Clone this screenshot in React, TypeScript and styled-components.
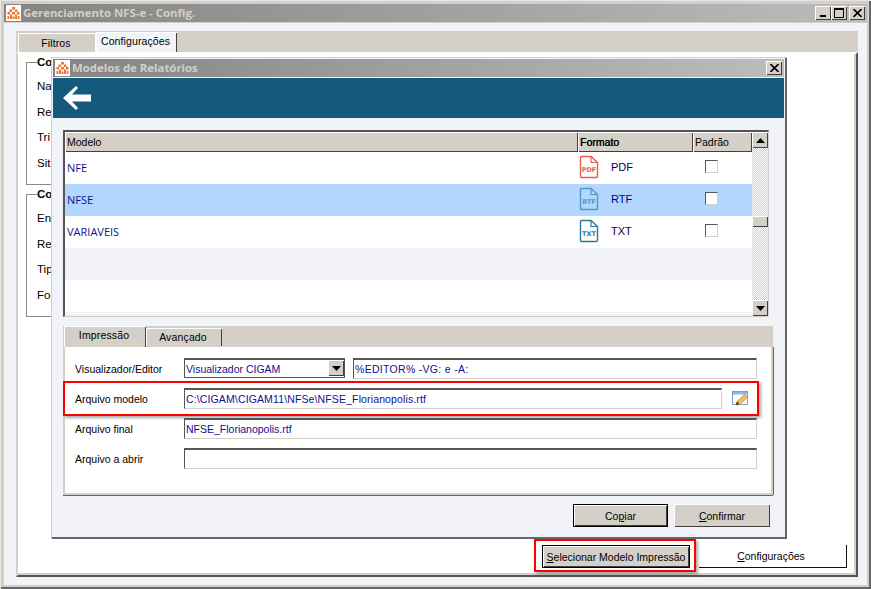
import React from "react";
import styled, { createGlobalStyle } from "styled-components";

const Global = createGlobalStyle`
  html, body { margin: 0; padding: 0; background: #fff; }
  body { font-family: "Liberation Sans", Arial, sans-serif; font-size: 10.5px; color: #000; }
  * { box-sizing: border-box; }
`;

const Win = styled.div`
  position: relative; width: 871px; height: 589px; padding: 4px;
  background: #d4d0c8; display: flex; flex-direction: column; overflow: hidden;
  box-shadow: inset 1px 1px 0 #e8e6e0, inset -2px -2px 0 #666;
`;
const TitleBar = styled.div`
  height: 18px; flex: none; display: flex; align-items: center; padding: 0 2px;
  background: linear-gradient(90deg, #848484, #bcbcbc);
`;
const TitleText = styled.span`
  margin-left: 2px; padding-bottom: 1px; font-family: "Open Sans", sans-serif; font-weight: 700; font-size: 11.4px;
  color: #d4d0c8; flex: 1; white-space: nowrap;
`;
const WinBtn = styled.button`
  width: 16px; height: 14px; padding: 0; background: #d4d0c8; border: 0;
  box-shadow: inset 1px 1px 0 #fff, inset -1px -1px 0 #404040;
  display: flex; align-items: center; justify-content: center;
`;
const CloseBtn = styled(WinBtn)`
  margin-left: 2px;
`;
const Body = styled.div`
  flex: 1; background: #f1f3f9; margin-top: 1px; padding: 8px 9px 8px 12px;
  display: flex; flex-direction: column; min-height: 0;
`;
const TabStrip = styled.div`
  height: 21px; flex: none; background: #d4d0c8; display: flex; align-items: flex-end; padding-left: 2px;
`;
const OuterTab = styled.div<{ $on?: boolean }>`
  width: ${p => p.$on ? 81 : 78}px; height: ${p => p.$on ? 21 : 19}px;
  margin-bottom: ${p => p.$on ? -1 : 0}px;
  background: ${p => p.$on ? "#f1f3f9" : "#d4d0c8"};
  box-shadow: inset 1px 1px 0 #fff, ${p => p.$on ? "inset -1px 0 0 #404040" : "inset -1px 0 0 #fff"};
  display: flex; align-items: center; justify-content: center;
  padding: 0 2px ${p => p.$on ? 3 : 0}px 0; position: relative; letter-spacing: .1px;
`;
const Page = styled.div`
  position: relative; flex: 1; background: #fff; padding: 1px 9px 7px 8px; display: flex; flex-direction: column;
  border-style: solid; border-width: 2px; border-color: #fff #555 #555 #d4d0c8;
  box-shadow: inset -2px -2px 0 #d4d0c8;
`;
const Group = styled.fieldset`
  margin: 0 0 2px; padding: 0 0 0 10px; width: 750px; border: 1px solid #8a8a8a; height: 130px; min-width: 0;
  display: flex; flex-direction: column;
  & > legend { font-weight: 700; padding: 0; margin-left: 0; font-size: 11.5px; line-height: 14px; }
`;
const GroupLabel = styled.div`
  height: 25.7px; line-height: 25.7px; font-size: 11.5px; position: relative; top: 5px;
`;
const PageFoot = styled.div`
  margin-top: auto; display: flex; justify-content: flex-end; gap: 9px; height: 23px;
`;
const Btn = styled.button<{ $def?: boolean; $w: number }>`
  position: relative; width: ${p => p.$w}px; height: 23px; padding: 0;
  font: inherit; color: #000; background: #d4d0c8; white-space: nowrap;
  border: ${p => p.$def ? "1px solid #000" : "0"};
  box-shadow: inset 1px 1px 0 #fff, inset -1px -1px 0 #404040;
`;
const FlatBtn = styled.button`
  width: 148px; height: 23px; padding: 0 3px 0 0; font: inherit; color: #000; background: #fff;
  border: 0; border-right: 1px solid #111; border-bottom: 1px solid #111;
`;
const Acc = styled.span` text-decoration: underline; `;
const Highlight = styled.div`
  position: absolute; border: 2px solid #f00; pointer-events: none;
  box-shadow: 2px 2px 3px rgba(0,0,0,.35);
`;
const Modal = styled.div`
  position: absolute; left: 51px; top: 57px; width: 736px; height: 482px; z-index: 2;
  background: #f1f3f9; padding: 2px; display: flex; flex-direction: column;
  box-shadow: inset 1px 1px 0 #d4d0c8, inset -2px -2px 0 #666;
`;
const ModalWrap = styled.div`
  flex: 1; display: flex; flex-direction: column; min-height: 0; margin-right: 1px;
`;
const Band = styled.div`
  margin-top: 1px; height: 40px; flex: none; background: #135a7c; display: flex; align-items: center; padding-left: 10px;
`;
const ModalBody = styled.div`
  flex: 1; padding: 12px 13px 0 10px; display: flex; flex-direction: column;
`;
const Grid = styled.div`
  height: 187px; width: 706px; flex: none; display: flex; background: #f1f3f9;
  border-top: 2px solid #555; border-left: 2px solid #555; border-right: 1px solid #d4d0c8; border-bottom: 1px solid #d4d0c8;
`;
const GridMain = styled.div` width: 687px; display: flex; flex-direction: column; `;
const HeadRow = styled.div`
  display: grid; grid-template-columns: 513px 115px 59px; height: 20px; flex: none;
`;
const HeadCell = styled.div<{ $strong?: boolean }>`
  background: #d4d0c8; padding-left: 2px; line-height: 20px;
  box-shadow: inset 1px 1px 0 #fff, inset -1px -1px 0 #404040;
  ${p => p.$strong ? "text-shadow: 0.3px 0 0 #000;" : ""}
`;
const Row = styled.div<{ $bg: string }>`
  display: grid; grid-template-columns: 513px 115px 59px; height: 32px; flex: none; background: ${p => p.$bg};
`;
const CellName = styled.div`
  color: #101090; padding: 0 0 2px 2px; display: flex; align-items: center; font-family: "Open Sans", sans-serif; font-size: 11px;
`;
const CellFmt = styled.div<{ $c: string }>`
  display: flex; align-items: center; padding-left: 1px; padding-bottom: 3px; gap: 12px; color: ${p => p.$c}; font-size: 11px;
`;
const CellChk = styled.div` display: flex; padding: 8px 0 0 12px; `;
const Check = styled.span`
  width: 13px; height: 13px; display: block; background: #fff;
  border: 1px solid #d4d0c8; border-top-color: #555; border-left-color: #555;
`;
const Scroll = styled.div`
  width: 16px; flex: none; display: flex; flex-direction: column; justify-content: space-between; position: relative;
  background: repeating-conic-gradient(#d4d0c8 0 25%, #fff 0 50%) 0 0 / 2px 2px;
`;
const ScrollBtn = styled.div`
  width: 16px; height: 16px; background: #d4d0c8; display: flex; align-items: center; justify-content: center;
  box-shadow: inset 1px 1px 0 #fff, inset -1px -1px 0 #404040;
`;
const Thumb = styled(ScrollBtn)`
  position: absolute; left: 0; top: 84px; height: 11px;
`;
const SubStrip = styled.div`
  margin-top: 9px; height: 21px; width: 710px; flex: none; background: #d4d0c8; display: flex; align-items: flex-end; padding-left: 1px;
`;
const SubTab = styled.div<{ $on?: boolean }>`
  width: ${p => p.$on ? 82 : 76}px; height: ${p => p.$on ? 21 : 18}px; background: #d4d0c8;
  margin-bottom: ${p => p.$on ? 0 : 1}px; letter-spacing: .15px;
  box-shadow: inset 1px 1px 0 #fff, inset -1px 0 0 #404040;
  display: flex; align-items: center; justify-content: center; padding: 0 2px ${p => p.$on ? 3 : 0}px 0;
`;
const SubPanel = styled.div`
  width: 710px; height: 148px; flex: none; background: #fff; padding: 11px 0 0 10px; display: flex; flex-direction: column; gap: 9px;
  border: 2px solid #d4d0c8; border-top: 0;
  box-shadow: 0 1px 0 #666, 1px 0 0 #666;
`;
const FormRow = styled.div` position: relative; display: flex; height: 21px; align-items: center; `;
const FormLabel = styled.label` width: 109px; flex: none; `;
const Field = styled.div<{ $w: number; $ml?: number; $ls?: number }>`
  width: ${p => p.$w}px; margin-left: ${p => p.$ml || 0}px; height: 21px; flex: none; background: #fff;
  border: 1px solid #d4d0c8; border-top: 2px solid #555; border-left: 1px solid #555;
  color: #101090; line-height: 19px; padding-left: 1px; white-space: nowrap; overflow: hidden;
  letter-spacing: ${p => p.$ls || 0}px;
`;
const Select = styled(Field)`
  position: relative; padding-left: 1px; border-right-color: #555; border-bottom-color: #555; height: 20px; align-self: flex-start;
  line-height: 18px;
`;
const SelectBtn = styled(ScrollBtn)`
  position: absolute; right: 0; top: 0; height: 16px;
`;
const ModalFoot = styled.div`
  margin-top: 9px; display: flex; justify-content: flex-end; gap: 6px; width: 707px;
`;

const Logo = () => (
  <svg width="15" height="16" viewBox="0 0 15 16" style={{ flex: "none" }}>
    <rect width="15" height="16" fill="#fff" />
    <g fill="#f4742b">
      <rect x="6" y="2" width="3" height="2.500" />
      <rect x="3.500" y="4.500" width="2.500" height="2.500" /><rect x="9" y="4.500" width="2.500" height="2.500" />
      <rect x="1.500" y="7" width="2.500" height="2.500" /><rect x="6" y="7" width="3" height="2.500" /><rect x="11" y="7" width="2.500" height="2.500" />
      <rect x="4" y="9.500" width="2" height="4.500" /><rect x="9" y="9.500" width="2" height="4.500" />
      <rect x="1.500" y="11" width="1.800" height="3" /><rect x="11.700" y="11" width="1.800" height="3" /><rect x="6.500" y="11.500" width="2" height="2.500" />
    </g>
  </svg>
);
const CloseGlyph = () => (
  <svg width="9" height="8" viewBox="0 0 9 8"><path d="M0.500 0L8.500 8M8.500 0L0.500 8" stroke="#000" strokeWidth="1.600" /></svg>
);
const FileIcon = ({ color, label }: { color: string; label: string }) => (
  <svg width="20" height="24" viewBox="0 0 20 24" style={{ flex: "none" }}>
    <path d="M1.500 2.500a1 1 0 0 1 1-1H12l6.500 6V21.500a1 1 0 0 1-1 1h-15a1 1 0 0 1-1-1z" fill="none" stroke={color} strokeWidth="1.400" />
    <path d="M12 1.500V7.500H18.500" fill="none" stroke={color} strokeWidth="1.200" />
    <text x="10" y="16.500" textAnchor="middle" fontSize="6.500" fontWeight="700" fontFamily="DejaVu Sans, sans-serif" fill={color}>{label}</text>
  </svg>
);
const Tri = ({ up }: { up?: boolean }) => (
  <svg width="9" height="5" viewBox="0 0 9 5"><path d={up ? "M4.500 0L9 5H0z" : "M0 0H9L4.500 5z"} fill="#000" /></svg>
);

const rows = [
  { n: "NFE", f: "PDF", c: "#ee5a4e", tc: "#000060", bg: "#ffffff" },
  { n: "NFSE", f: "RTF", c: "#4a9cc8", tc: "#000090", bg: "#b2d6fd" },
  { n: "VARIAVEIS", f: "TXT", c: "#2f7a9c", tc: "#200040", bg: "#ffffff" },
];

export default function App() {
  return (
    <Win>
      <Global />
      <TitleBar>
        <Logo />
        <TitleText>Gerenciamento NFS-e - Config.</TitleText>
        <WinBtn aria-label="min"><svg width="8" height="8" viewBox="0 0 8 8"><rect x="1" y="6" width="6" height="2" /></svg></WinBtn>
        <WinBtn aria-label="max"><svg width="10" height="10" viewBox="0 0 10 10"><path d="M.5 1.500H9.500V9.500H.5z" fill="none" stroke="#000" /><rect width="10" height="2" /></svg></WinBtn>
        <CloseBtn aria-label="close"><CloseGlyph /></CloseBtn>
      </TitleBar>
      <Body>
        <TabStrip>
          <OuterTab>Filtros</OuterTab>
          <OuterTab $on>Configurações</OuterTab>
        </TabStrip>
        <Page>
          <Group>
            <legend>Co</legend>
            {["Na", "Re", "Tri", "Sit"].map(t => <GroupLabel key={t}>{t}</GroupLabel>)}
          </Group>
          <Group>
            <legend>Co</legend>
            {["En", "Re", "Tip", "Fo"].map(t => <GroupLabel key={t}>{t}</GroupLabel>)}
          </Group>
          <PageFoot>
            <Btn $def $w={148}>
              <Acc>S</Acc>elecionar Modelo Impressão
              <Highlight style={{ left: -9, right: -7, top: -7, bottom: -5 }} />
            </Btn>
            <FlatBtn><Acc>C</Acc>onfigurações</FlatBtn>
          </PageFoot>
        </Page>
      </Body>
      <Modal>
        <ModalWrap>
          <TitleBar>
            <Logo />
            <TitleText>Modelos de Relatórios</TitleText>
            <WinBtn aria-label="close"><CloseGlyph /></WinBtn>
          </TitleBar>
          <Band>
            <svg width="28" height="24" viewBox="0 0 28 24"><path d="M13 0L0 12L13 24L15 22L9 15.500H28V8.500H9L15 2z" fill="#fff" /></svg>
          </Band>
          <ModalBody>
            <Grid>
              <GridMain>
                <HeadRow>
                  <HeadCell>Modelo</HeadCell>
                  <HeadCell $strong>Formato</HeadCell>
                  <HeadCell>Padrão</HeadCell>
                </HeadRow>
                {rows.map(r => (
                  <Row key={r.n} $bg={r.bg}>
                    <CellName>{r.n}</CellName>
                    <CellFmt $c={r.tc}>
                      <FileIcon color={r.c} label={r.f} />
                      {r.f}
                    </CellFmt>
                    <CellChk><Check /></CellChk>
                  </Row>
                ))}
                <Row $bg="#f1f3f9" />
                <Row $bg="#ffffff" />
              </GridMain>
              <Scroll>
                <ScrollBtn><Tri up /></ScrollBtn>
                <Thumb />
                <ScrollBtn><Tri /></ScrollBtn>
              </Scroll>
            </Grid>
            <SubStrip>
              <SubTab $on>Impressão</SubTab>
              <SubTab>Avançado</SubTab>
            </SubStrip>
            <SubPanel>
              <FormRow>
                <FormLabel>Visualizador/Editor</FormLabel>
                <Select $w={161}>
                  Visualizador CIGAM
                  <SelectBtn><Tri /></SelectBtn>
                </Select>
                <Field $w={404} $ml={8} $ls={0.3}>%EDITOR% -VG: e -A:</Field>
              </FormRow>
              <FormRow>
                <FormLabel>Arquivo modelo</FormLabel>
                <Field $w={538} $ls={0.13}>C:\CIGAM\CIGAM11\NFSe\NFSE_Florianopolis.rtf</Field>
                <svg width="18" height="16" viewBox="0 0 18 16" style={{ marginLeft: 10, flex: "none" }}>
                  <rect x=".5" y=".5" width="15" height="13" fill="#fff" stroke="#7f9fd0" />
                  <rect x="1" y="1" width="14" height="2.500" fill="#8fb4e8" />
                  <path d="M4 14L5 10.500L12.500 3.500L15.500 6L8 13.500z" fill="#f0c060" stroke="#b08030" strokeWidth=".7" />
                  <path d="M4 14L5 10.500L7.500 13z" fill="#403020" />
                </svg>
                <Highlight style={{ left: -12, top: -7, width: 696, height: 35 }} />
              </FormRow>
              <FormRow>
                <FormLabel>Arquivo final</FormLabel>
                <Field $w={573}>NFSE_Florianopolis.rtf</Field>
              </FormRow>
              <FormRow>
                <FormLabel>Arquivo a abrir</FormLabel>
                <Field $w={573} />
              </FormRow>
            </SubPanel>
            <ModalFoot>
              <Btn $def $w={95}>Co<Acc>p</Acc>iar</Btn>
              <Btn $w={96}><Acc>C</Acc>onfirmar</Btn>
            </ModalFoot>
          </ModalBody>
        </ModalWrap>
      </Modal>
    </Win>
  );
}
